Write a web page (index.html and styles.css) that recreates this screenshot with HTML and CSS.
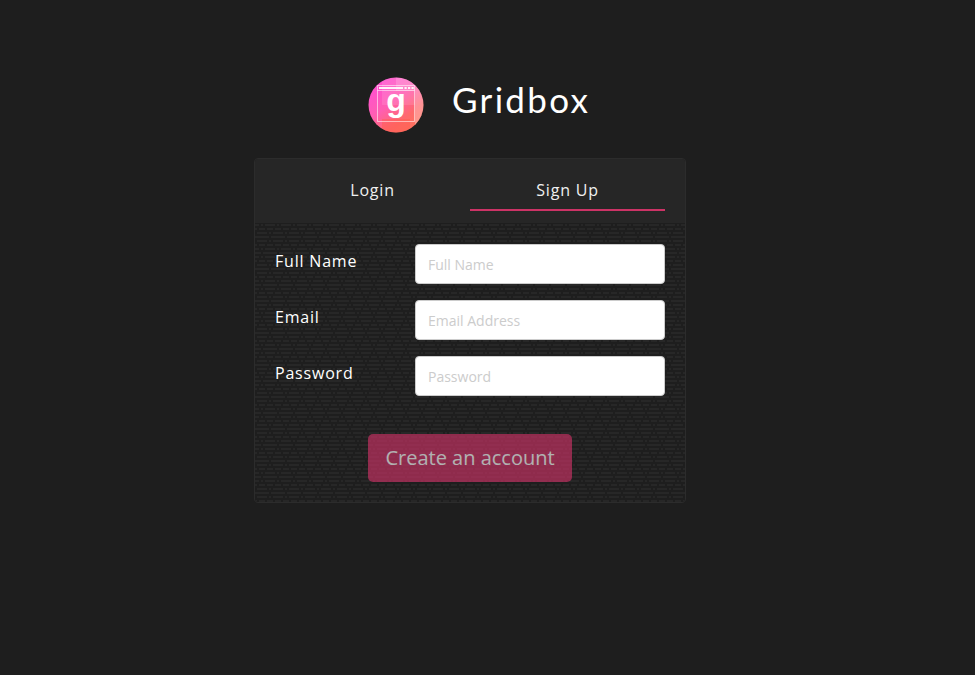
FILE: index.html
```html
<!DOCTYPE html>
<html lang="en">
<head>
<meta charset="utf-8">
<title>Gridbox</title>
<link rel="stylesheet" href="styles.css">
</head>
<body>
<main class="page">
  <header class="brand">
    <svg class="logo" viewBox="0 0 56 56" aria-hidden="true">
      <defs>
        <linearGradient id="fill" x1="0.15" y1="0.1" x2="0.75" y2="0.9">
          <stop offset="0" stop-color="#ff50d2"/>
          <stop offset="0.45" stop-color="#ff5eb2"/>
          <stop offset="0.8" stop-color="#ff6a6c"/>
          <stop offset="1" stop-color="#ff7060"/>
        </linearGradient>
        <clipPath id="disc"><circle cx="28" cy="28" r="27.5"/></clipPath>
      </defs>
      <g clip-path="url(#disc)">
        <path fill="url(#fill)" d="M0 0h56v56H0z"/>
        <path fill="#fff" opacity=".12" d="M14 0h14v28H14z"/>
        <path fill="#fff" opacity=".28" d="M28 0h28v14H28zM47 14h9v42h-9z"/>
        <path fill="#fff" opacity=".12" d="M28 14h19v14H28z"/>
        <path fill="#ff5a50" opacity=".45" d="M14 42h28v14H14z"/>
      </g>
      <path fill="none" stroke="#fff" opacity=".55" d="M9.5 8.5h37v36h-37zM9.5 13.5h37"/>
      <path fill="none" stroke="#fff" stroke-width="1.8" opacity=".9" d="M11 11h24M36.5 11h2.2M40 11h2.2M43.5 11h2.2"/>
      <text class="logo-letter" x="28" y="34" text-anchor="middle">g</text>
    </svg>
    <h1 class="title">Gridbox</h1>
  </header>
  <section class="card">
    <nav class="tabs">
      <a class="tab">Login</a>
      <a class="tab tab-active">Sign Up</a>
    </nav>
    <form class="form">
      <div class="field">
        <label class="label" for="name">Full Name</label>
        <input class="input" id="name" type="text" placeholder="Full Name">
      </div>
      <div class="field">
        <label class="label" for="email">Email</label>
        <input class="input" id="email" type="email" placeholder="Email Address">
      </div>
      <div class="field">
        <label class="label" for="password">Password</label>
        <input class="input" id="password" type="password" placeholder="Password">
      </div>
      <button class="submit" type="button">Create an account</button>
    </form>
  </section>
</main>
</body>
</html>
```
FILE: styles.css
```css
* {
  box-sizing: border-box;
}

body {
  margin: 0;
  min-height: 675px;
  background: #1e1e1e;
  color: #fff;
  font-family: "Open Sans", sans-serif;
  font-size: 16px;
  letter-spacing: 0.8px;
}

.page {
  width: 432px;
  margin-left: 254px;
  padding-top: 76px;
}

.brand {
  display: flex;
  height: 82px;
  padding-left: 114px;
}

.logo {
  width: 56px;
  height: 56px;
  margin-top: 0.6px;
  flex: none;
}

.logo-letter {
  fill: #fff;
  font: 700 32px "Liberation Sans", sans-serif;
  letter-spacing: 0;
}

.title {
  margin: 0 0 0 28px;
  font: 400 35px/47px Lato, sans-serif;
  letter-spacing: 2.3px;
}

.card {
  height: 345px;
  border: 1px solid #2c2c2c;
  border-radius: 4px;
  overflow: hidden;
}

.tabs {
  display: flex;
  height: 64px;
  padding: 10px 20px 12px;
  background: #262626;
}

.tab {
  flex: 1;
  height: 42px;
  line-height: 42px;
  text-align: center;
  color: #f0f0f0;
}

.tab-active {
  border-bottom: 2px solid #cc3366;
}

.form {
  display: flex;
  flex-direction: column;
  height: 279px;
  padding: 21px 20px 20px;
  gap: 16px;
  background: url("data:image/svg+xml,%3Csvg xmlns='http://www.w3.org/2000/svg' width='16' height='32'%3E%3Cpath fill='%23272727' d='M0 0h4v2H0zM6 0h2v2H6zM10 0h6v2h-6zM0 4h2v2H0zM4 4h6v2H4zM12 4h4v2h-4zM2 8h10v2H2zM14 8h2v2h-2zM0 12h14v2H0zM2 16h10v2H2zM14 16h2v2h-2zM0 20h2v2H0zM4 20h6v2H4zM12 20h4v2h-4zM0 24h4v2H0zM6 24h2v2H6zM10 24h6v2h-6zM0 28h6v2H0zM8 28h8v2H8z'/%3E%3C/svg%3E") 0 1px #1e1e1e;
}

.field {
  display: flex;
  height: 40px;
}

.label {
  width: 140px;
  line-height: 34px;
}

.input {
  width: 250px;
  height: 40px;
  padding: 0 12px;
  border: 1px solid #ccc;
  border-radius: 4px;
  background: #fff;
  font: 14px "Open Sans", sans-serif;
  letter-spacing: 0;
}

.input::placeholder {
  color: #ccc;
}

.submit {
  align-self: center;
  width: 204px;
  height: 48px;
  margin-top: 22px;
  padding: 0 0 2px;
  border: 0;
  border-radius: 5px;
  background: #cc3366;
  color: #fff;
  font: 20px "Open Sans", sans-serif;
  opacity: .65;
}
```
